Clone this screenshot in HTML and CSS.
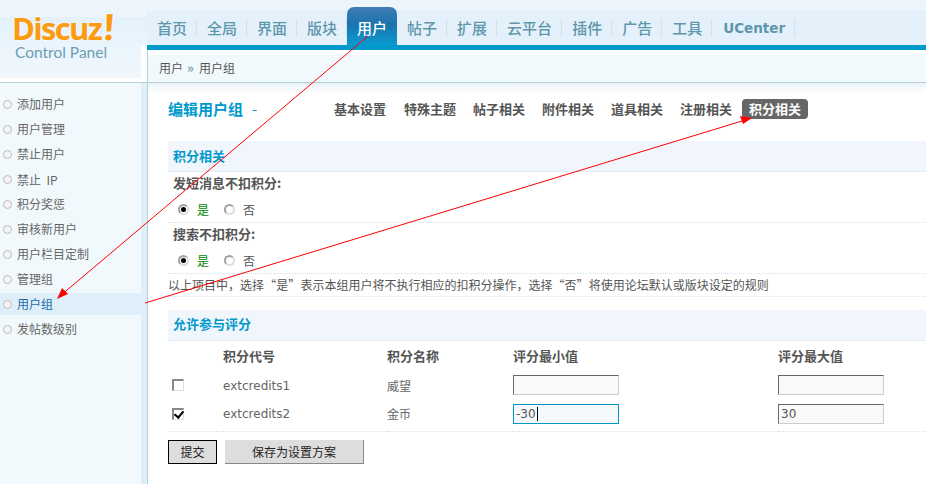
FILE: index.html
```html
<!DOCTYPE html>
<html lang="zh">
<head>
<meta charset="utf-8">
<title>Discuz! Control Panel</title>
<link rel="stylesheet" href="styles.css">
</head>
<body>
<div class="page">
  <aside class="aside">
    <div class="logo">
      <div class="brand">Discuz<span class="bang">!</span></div>
      <div class="sub">Control Panel</div>
    </div>
    <ul class="menu">
      <li>添加用户</li>
      <li>用户管理</li>
      <li>禁止用户</li>
      <li class="tall">禁止&nbsp;&nbsp;IP</li>
      <li>积分奖惩</li>
      <li>审核新用户</li>
      <li>用户栏目定制</li>
      <li>管理组</li>
      <li class="on">用户组</li>
      <li>发帖数级别</li>
    </ul>
  </aside>
  <main class="main">
    <nav class="nav">
      <a>首页</a><a>全局</a><a>界面</a><a>版块</a><a class="on">用户</a><a>帖子</a><a>扩展</a><a>云平台</a><a>插件</a><a>广告</a><a>工具</a><a class="latin">UCenter</a>
    </nav>
    <div class="bar"></div>
    <div class="crumb">用户<span class="sep">»</span>用户组</div>
    <div class="content">
      <div class="titlerow">
        <h1 class="title">编辑用户组<span class="dash">-</span></h1>
        <div class="tabs">
          <a>基本设置</a><a>特殊主题</a><a>帖子相关</a><a>附件相关</a><a>道具相关</a><a>注册相关</a><a class="on">积分相关</a>
        </div>
      </div>
      <h2 class="head">积分相关</h2>
      <div class="label">发短消息不扣积分:</div>
      <div class="choice">
        <label class="opt yes"><input type="radio" name="a" checked>是</label>
        <label class="opt"><input type="radio" name="a">否</label>
      </div>
      <div class="label">搜索不扣积分:</div>
      <div class="choice">
        <label class="opt yes"><input type="radio" name="b" checked>是</label>
        <label class="opt"><input type="radio" name="b">否</label>
      </div>
      <div class="note">以上项目中，选择 “是” 表示本组用户将不执行相应的扣积分操作，选择 “否” 将使用论坛默认或版块设定的规则</div>
      <h2 class="head second">允许参与评分</h2>
      <table class="grid">
        <colgroup><col class="c1"><col class="c2"><col class="c3"><col class="c4"><col></colgroup>
        <thead>
          <tr><th></th><th>积分代号</th><th>积分名称</th><th>评分最小值</th><th>评分最大值</th></tr>
        </thead>
        <tbody>
          <tr>
            <td><input type="checkbox" class="check"></td><td>extcredits1</td><td>威望</td>
            <td><span class="field"></span></td><td><span class="field"></span></td>
          </tr>
          <tr class="last">
            <td><input type="checkbox" class="check" checked></td><td>extcredits2</td><td>金币</td>
            <td><span class="field focus">-30<i class="caret"></i></span></td><td><span class="field">30</span></td>
          </tr>
        </tbody>
      </table>
      <div class="actions">
        <button class="btn primary">提交</button>
        <button class="btn save">保存为设置方案</button>
      </div>
    </div>
  </main>
  <svg class="arrows" width="926" height="484" viewBox="0 0 926 484">
    <line x1="368" y1="36" x2="60" y2="296"/>
    <polygon points="57,299 62,288 68,294"/>
    <line x1="145" y1="303" x2="742" y2="121"/>
    <polygon points="752,118 740,116 743,124"/>
  </svg>
</div>
</body>
</html>
```
FILE: styles.css
```css
* { box-sizing: border-box; }
html, body { margin: 0; padding: 0; background: #fff; }
body {
  font-family: "Noto Sans CJK SC", "Liberation Sans", sans-serif;
  font-size: 12px;
  color: #666;
}
.page {
  position: relative;
  display: flex;
  width: 926px;
  height: 484px;
  overflow: hidden;
}

/* left column */
.aside {
  flex: 0 0 148px;
  display: flex;
  flex-direction: column;
  border-right: 1px solid #b5cfd9;
  background: linear-gradient(to right, #f2f9fd 141px, #deeffa 141px);
}
.logo {
  position: relative;
  height: 83px;
  padding: 9px 0 0 12px;
  border-bottom: 1px solid #b5cfd9;
  background: linear-gradient(#eef5fd 17px, #e4f1fb 17px, #f1f8fd 78px, #fff 78px);
}
.logo::after {
  content: "";
  position: absolute;
  right: 0;
  top: 45px;
  width: 6px;
  height: 37px;
  background: #fff;
}
.brand {
  font-family: "Open Sans", "Liberation Sans", sans-serif;
  font-size: 31px;
  font-weight: 700;
  line-height: 36px;
  letter-spacing: -1.7px;
  color: #fa9b12;
  text-shadow: 0 0 2px #fff;
}
.bang { font-size: 36px; margin-left: 3px; display: inline-block; transform: skewX(-3deg); }
.sub {
  font-family: "Lato", "Liberation Sans", sans-serif;
  font-size: 15.5px;
  line-height: 16px;
  margin: -2px 0 0 3px;
  color: #6b9db3;
}
.menu {
  list-style: none;
  margin: 9px 0 0;
  padding: 0;
}
.menu li {
  position: relative;
  width: 141px;
  height: 25px;
  line-height: 24px;
  padding-left: 17px;
  color: #666;
}
.menu li::before {
  content: "";
  position: absolute;
  left: 3px;
  top: 8px;
  width: 7px;
  height: 7px;
  border: 1px solid #bbb;
  border-radius: 50%;
  background: #f4f4f4;
}
.menu li.tall { line-height: 26px; }
.menu li.on {
  width: 147px;
  height: 22px;
  margin: 1px 0 2px;
  line-height: 22px;
  background: #deeffa;
  color: #1c6aa6;
}
.menu li.on::before { top: 7px; }

/* right column */
.main { flex: 1; min-width: 0; }
.nav {
  display: flex;
  height: 45px;
  margin-left: -1px;
  padding: 7px 0 0;
  background: linear-gradient(#eef5fd 10px, #e4f1fb 10px);
}
.nav a {
  position: relative;
  height: 38px;
  padding: 11px 10px 0;
  font-size: 15px;
  line-height: 20px;
  font-weight: 500;
  color: #5f96ab;
}
.nav a::after {
  content: "";
  position: absolute;
  right: 0;
  top: 12px;
  width: 1px;
  height: 18px;
  background: #d3e3ee;
}
.nav a.on {
  border-radius: 7px 7px 0 0;
  background: linear-gradient(#427db4, #1a73ad 45%, #0a9ad0);
  color: #fff;
}
.nav a.on::after { display: none; }
.nav a.latin {
  font-family: "DejaVu Sans", sans-serif;
  font-size: 13.5px;
  font-weight: 700;
  padding-left: 11px;
}
.bar { height: 5px; margin-left: -1px; background: #0099cc; }
.crumb {
  height: 33px;
  padding: 10px 0 0 11px;
  line-height: 16px;
  color: #555;
  background: linear-gradient(#fff 5px, #f2f9fd 5px);
  border-bottom: 1px solid #b5cfd9;
}
.sep { margin: 0 5px 0 4px; font-size: 13px; color: #7d9fb0; font-weight: 700; }
.content {
  padding: 0 0 0 20px;
  background: linear-gradient(#e9f3fa, #fff 10px) no-repeat left top / 100% 10px;
}
.titlerow {
  display: flex;
  align-items: center;
  height: 58px;
  padding-bottom: 7px;
}
.title {
  flex: 0 0 158px;
  margin: 0;
  font-size: 15px;
  line-height: 20px;
  font-weight: 700;
  color: #0099cc;
}
.dash { margin-left: 9px; font-weight: 400; }
.tabs { display: flex; align-items: center; }
.tabs a {
  padding: 0 8px;
  margin-right: 1px;
  font-size: 13px;
  line-height: 20px;
  font-weight: 700;
  color: #555;
}
.tabs a:first-child { margin-right: 2px; }
.tabs a.on {
  padding: 0 7px;
  margin-left: 1px;
  border-radius: 4px;
  background: #666;
  color: #fff;
}
.head {
  height: 31px;
  margin: 0;
  padding-left: 5px;
  font-size: 13px;
  line-height: 29px;
  font-weight: 700;
  color: #0099cc;
  background: #f1f6fd;
  border-bottom: 1px dotted #cfe3f2;
}
.head.second { margin-top: 13px; line-height: 27px; }
.label {
  height: 24px;
  padding-left: 5px;
  font-size: 13px;
  line-height: 22px;
  font-weight: 700;
  color: #555;
}
.choice {
  display: flex;
  height: 27px;
  padding: 3px 0 0 10px;
  border-bottom: 1px dotted #cfe3f2;
}
.opt {
  display: flex;
  align-items: center;
  width: 41px;
  height: 20px;
  color: #555;
}
.opt.yes { width: 46px; color: #008a00; }
.opt input {
  appearance: none;
  flex: none;
  position: relative;
  width: 11px;
  height: 11px;
  margin: 0 8px 0 0;
  border: 2px solid #a0a0a0;
  border-right-color: #ddd;
  border-bottom-color: #ddd;
  border-radius: 50%;
  background: #fff;
}
.opt input:checked::after {
  content: "";
  position: absolute;
  left: 1px;
  top: 1px;
  width: 5px;
  height: 5px;
  border-radius: 50%;
  background: #000;
}
.note {
  height: 23px;
  line-height: 22px;
  word-spacing: -2.5px;
  color: #555;
  border-bottom: 1px dotted #cfe3f2;
}
.grid {
  width: 758px;
  border-collapse: collapse;
  table-layout: fixed;
}
.c1 { width: 55px; }
.c2 { width: 164px; }
.c3 { width: 126px; }
.c4 { width: 265px; }
.grid th {
  height: 31px;
  padding: 0 0 2px;
  text-align: left;
  font-size: 13px;
  font-weight: 700;
  color: #555;
}
.grid td {
  height: 28px;
  padding: 0 0 2px;
  font-family: "DejaVu Sans", "Noto Sans CJK SC", sans-serif;
  font-size: 12px;
  color: #666;
}
.grid td:nth-child(2) { padding-bottom: 0; }
.grid tr.last td { height: 31px; padding-bottom: 3px; border-bottom: 1px dotted #cfe3f2; }
.check {
  appearance: none;
  display: block;
  position: relative;
  width: 12px;
  height: 12px;
  margin: 0 0 0 4px;
  border: 1px solid #ddd;
  border-top: 2px solid #888;
  border-left: 2px solid #888;
  background: #fff;
}
.check:checked::after {
  content: "";
  position: absolute;
  left: 2px;
  top: -1px;
  width: 4px;
  height: 7px;
  border: solid #000;
  border-width: 0 2px 2px 0;
  transform: rotate(40deg);
}
.field {
  display: flex;
  align-items: center;
  width: 106px;
  height: 20px;
  padding-left: 2px;
  border: 1px solid #ccc;
  border-top-color: #666;
  border-left-color: #666;
  background: #f9f9f9;
  color: #555;
  font-family: "DejaVu Sans", sans-serif;
  font-size: 12px;
}
.field.focus {
  border-color: #0099cc;
  background: #f5f9fd;
}
.caret {
  display: block;
  width: 1px;
  height: 14px;
  margin-left: 1px;
  background: #000;
}
.actions { display: flex; gap: 8px; margin-top: 8px; }
.btn {
  height: 24px;
  padding: 0;
  font-family: "Noto Sans CJK SC", sans-serif;
  font-size: 12px;
  color: #222;
  background: #ddd;
  border: 0;
}
.btn.primary { width: 49px; border: 1px solid #000; }
.btn.save { width: 139px; border-right: 1px solid #888; border-bottom: 1px solid #888; }

/* annotation arrows drawn over the screenshot */
.arrows { position: absolute; left: 0; top: 0; pointer-events: none; }
.arrows line { stroke: #f00; stroke-width: 1; }
.arrows polygon { fill: #f00; }
```
